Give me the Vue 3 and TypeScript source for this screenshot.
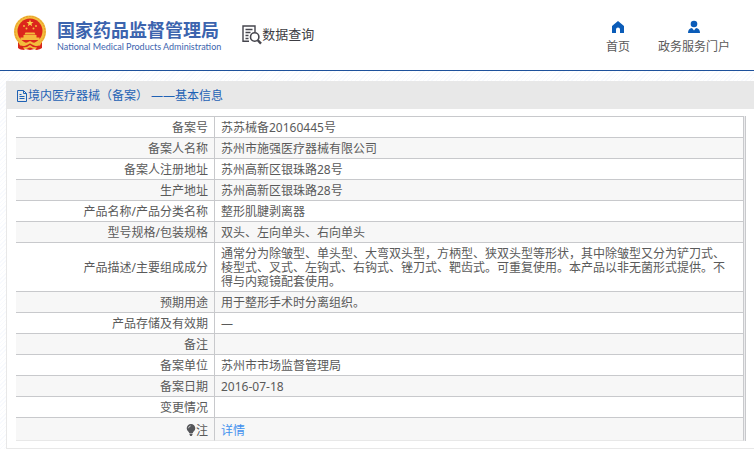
<script setup lang="ts">
interface Row {
  label: string
  value: string
}

const rows: Row[] = [
  { label: '备案号', value: '苏苏械备20160445号' },
  { label: '备案人名称', value: '苏州市施强医疗器械有限公司' },
  { label: '备案人注册地址', value: '苏州高新区银珠路28号' },
  { label: '生产地址', value: '苏州高新区银珠路28号' },
  { label: '产品名称/产品分类名称', value: '整形肌腱剥离器' },
  { label: '型号规格/包装规格', value: '双头、左向单头、右向单头' },
  {
    label: '产品描述/主要组成成分',
    value:
      '通常分为除皱型、单头型、大弯双头型，方柄型、狭双头型等形状，其中除皱型又分为铲刀式、棱型式、叉式、左钩式、右钩式、锉刀式、靶齿式。可重复使用。本产品以非无菌形式提供。不得与内窥镜配套使用。',
  },
  { label: '预期用途', value: '用于整形手术时分离组织。' },
  { label: '产品存储及有效期', value: '—' },
  { label: '备注', value: '' },
  { label: '备案单位', value: '苏州市市场监督管理局' },
  { label: '备案日期', value: '2016-07-18' },
  { label: '变更情况', value: '' },
]
</script>

<template>
  <div class="page">
    <header class="top">
      <a class="brand" href="#">
        <svg class="emblem" viewBox="0 0 34 36" aria-hidden="true">
          <path d="M5 25 L29 25 L29 33 Q25 36 22 34 L17 35 L12 34 Q8 36 5 33 Z" fill="#d8271c" />
          <circle cx="17" cy="16.5" r="16" fill="#f3bd3c" />
          <circle cx="17" cy="16.5" r="15" fill="none" stroke="#e5982c" stroke-width="1" stroke-dasharray="2 1" />
          <circle cx="17" cy="16" r="12.5" fill="#dc251c" />
          <path d="M17 4.6l.9 2.5h2.6l-2.1 1.6.8 2.5-2.2-1.5-2.2 1.5.8-2.5-2.1-1.6h2.6z" fill="#fbd24a" />
          <g fill="#f5b83d">
            <circle cx="11" cy="11" r="1" />
            <circle cx="23" cy="11" r="1" />
            <circle cx="13.5" cy="13.5" r="1" />
            <circle cx="20.5" cy="13.5" r="1" />
            <path d="M12.500 17.500h9l1 2h-11zM10.500 20h13v2.500h3V25H7.500v-2.500h3z" />
          </g>
          <path d="M5 26.500q5 3 9 1l3-1.500 3 1.500q4 2 9-1l-2 4-6 .5-4-2.500-4 2.500-6-.5z" fill="#f3bd3c" />
          <path d="M8 32l5-1.500 4-2 4 2 5 1.500-2 3-4-1.500-3-2-3 2-4 1.500z" fill="#d8271c" />
          <path d="M10 32.500l4-.5 3-2 3 2 4 .5-1.500 2-3-1-2.500-1.500-2.500 1.500-3 1z" fill="#f3bd3c" />
        </svg>
        <span class="names">
          <span class="cn">国家药品监督管理局</span>
          <span class="en">National Medical Products Administration</span>
        </span>
      </a>
      <a class="query" href="#">
        <svg class="query-icon" viewBox="0 0 20 20" fill="none" stroke="#45454d" aria-hidden="true">
          <path d="M7 16.300H1V1h12v6" stroke-width="1.400" />
          <path d="M3.500 4.500h7M3.500 7.500h5M3.500 10.500h3M3.500 13.500h3" stroke-width="1.300" />
          <circle cx="12.700" cy="12" r="4.200" stroke-width="1.600" />
          <path d="M15.800 15.200L19 18.600" stroke-width="2.400" />
        </svg>
        <span>数据查询</span>
      </a>
      <nav class="nav">
        <a href="#">
          <svg viewBox="0 0 14 14" fill="#0b5cb8" aria-hidden="true">
            <path d="M7 1l6 5v7H9V9.500a2 2 0 0 0-4 0V13H1V6z" />
          </svg>
          <span>首页</span>
        </a>
        <a href="#">
          <svg viewBox="0 0 14 14" fill="#0b5cb8" aria-hidden="true">
            <circle cx="7" cy="4" r="3.300" />
            <path d="M1 13q0-4.500 4-4.900L7 10.500l2-2.400q4 .4 4 4.900z" />
          </svg>
          <span>政务服务门户</span>
        </a>
      </nav>
    </header>

    <main class="panel">
      <h1 class="title">
        <svg viewBox="0 0 12 14" fill="none" stroke="#1f62b5" aria-hidden="true">
          <path d="M1.500 1.500h6l3 3v8h-9zM7.500 1.500v3h3M3.500 5.500h2M3.500 7.500h5M3.500 9.500h5" />
        </svg>
        <span>境内医疗器械（备案） ——基本信息</span>
      </h1>
      <div class="frame">
        <table>
          <tbody>
            <tr v-for="row in rows" :key="row.label">
              <th scope="row">{{ row.label }}</th>
              <td>{{ row.value }}</td>
            </tr>
            <tr class="note">
              <th scope="row">
                <svg viewBox="0 0 10 12" aria-hidden="true">
                  <path d="M5 0a4.300 4.300 0 0 1 4.300 4.300C9.300 7 7 7.500 6.800 9H3.200C3 7.500.7 7 .7 4.300A4.300 4.300 0 0 1 5 0zM3.500 9.600h3v1.200L5.700 12H4.300l-.8-1.200z" fill="#55565a" />
                  <path d="M2.500 4.200Q2.700 2.200 4.700 1.900" fill="none" stroke="#ddd" stroke-width=".8" />
                </svg>注
              </th>
              <td><a href="#">详情</a></td>
            </tr>
          </tbody>
        </table>
      </div>
    </main>
  </div>
</template>

<style>
body {
  margin: 0;
  background: #fff;
}
</style>

<style scoped>
.page {
  box-sizing: border-box;
  min-height: 100vh;
  font: 12px/14px "Noto Sans", "Noto Sans CJK SC", sans-serif;
  color: #5a5a5a;
  background: repeating-linear-gradient(135deg, #fff 0, #fff 2px, #f8fafe 2px, #f8fafe 3px);
}

a {
  color: inherit;
  text-decoration: none;
}

.top {
  display: flex;
  align-items: flex-start;
  box-sizing: border-box;
  height: 71px;
  padding: 0 24px 0 13px;
  background: #fff;
  border-bottom: 1px solid #1d519c;
}

.brand {
  display: flex;
  gap: 10px;
  padding-top: 15px;
}

.emblem {
  width: 34px;
  height: 36px;
}

.names {
  display: flex;
  flex-direction: column;
  padding-top: 1px;
  color: #3c64ae;
  white-space: nowrap;
}

.cn {
  font: bold 18px/26px "Noto Sans CJK SC", sans-serif;
}

.en {
  font: 9px/10px Lato, sans-serif;
}

.query {
  display: flex;
  gap: 0;
  padding: 25px 0 0 21px;
  font: 13px/18px "Noto Sans CJK SC", sans-serif;
  color: #3c3c42;
  white-space: nowrap;
}

.query-icon {
  width: 20px;
  height: 20px;
}

.nav {
  display: flex;
  gap: 28px;
  margin-left: auto;
  padding-top: 20px;
  white-space: nowrap;
}

.nav a {
  display: flex;
  flex-direction: column;
  align-items: center;
  gap: 6px;
}

.nav svg {
  width: 14px;
  height: 14px;
}

.panel {
  margin: 10px 0 0 6px;
  padding-bottom: 7px;
  background: #fff;
  border: 1px solid #e8e8e8;
  border-width: 0 0 1px 1px;
}

.title {
  display: flex;
  align-items: center;
  box-sizing: border-box;
  height: 28px;
  margin: 0;
  padding: 2px 0 0 9px;
  font-size: 12px;
  font-weight: normal;
  color: #1f62b5;
  background: #e8e8e8;
}

.title svg {
  width: 12px;
  height: 14px;
}

.frame {
  margin: 7px 8px 0 9px;
  padding-right: 1px;
  background: #ececee;
  border-right: 1px solid #c8c9cc;
}

table {
  width: 100%;
  border-collapse: separate;
  border-spacing: 0;
  border-top: 1px solid #c8c9cc;
  background: #fff;
}

th,
td {
  padding: 4px 6px 2px;
  height: 14px;
  font-weight: normal;
  border-right: 1px solid #c8c9cc;
  border-bottom: 1px solid #c8c9cc;
}

th {
  box-sizing: border-box;
  width: 199px;
  text-align: right;
}

td {
  padding-right: 14px;
}

tr:nth-child(even) {
  background: #f7f7f7;
}

.note th,
.note td {
  padding-top: 6px;
  border-bottom-color: #e8e8e8;
}

.note svg {
  width: 10px;
  height: 12px;
  vertical-align: -1px;
}

.note a {
  color: #4391ee;
}
</style>
